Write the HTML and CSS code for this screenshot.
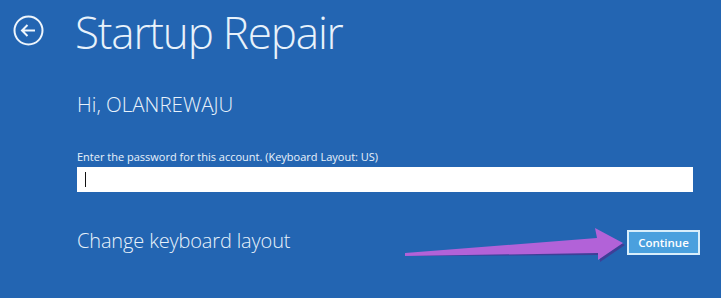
FILE: index.html
```html
<!DOCTYPE html>
<html>
<head>
  <meta charset="UTF-8">
  <title>Startup Repair</title>
  <link rel="stylesheet" href="styles.css">
</head>
<body>

<div id="screen">
  <div class="header">
    <button class="backBtn" aria-label="Back">
      <svg width="31" height="31" viewBox="0 0 31 31">
        <circle cx="15.5" cy="15.5" r="14" fill="none" stroke="#eef5fc" stroke-width="2"/>
        <path d="M9 15.5 H22 M14.5 10 L9 15.5 L14.5 21" fill="none" stroke="#eef5fc" stroke-width="2"/>
      </svg>
    </button>
    <h1>Startup Repair</h1>
  </div>

  <div class="content">
    <div class="greeting">Hi, OLANREWAJU</div>
    <label class="fieldLabel" for="password">Enter the password for this account. (Keyboard Layout: US)</label>
    <div class="passwordBox">
      <span class="caret"></span>
    </div>
    <div class="actions">
      <a class="changeLayout">Change keyboard layout</a>
      <button class="continueBtn">Continue</button>
    </div>
  </div>

  <svg class="pointer" width="230" height="40" viewBox="0 0 230 40">
    <polygon points="2,33 194,18 192,7 220,22 195,39 195,32" fill="#4a2f8c" opacity="0.7"/>
    <polygon points="0,30 192,15 190,5 218,20 193,37 193,30 0,33" fill="#b262d8"/>
  </svg>
</div>

</body>
</html>
```

FILE: styles.css
```css
body, html {
  margin: 0;
  padding: 0;
  background: #2365b2;
  font-family: "Open Sans", "Segoe UI", sans-serif;
  color: #e8f2fb;
  overflow: hidden;
}
#screen {
  position: relative;
  width: 721px;
  height: 298px;
}
.header {
  display: flex;
  align-items: center;
  height: 64px;
  padding-left: 13px;
}
.backBtn {
  background: none;
  border: none;
  padding: 0;
  width: 31px;
  height: 31px;
  margin-bottom: 4px;
}
.backBtn svg {
  display: block;
}
h1 {
  margin: 0 0 0 31px;
  font-size: 44px;
  font-weight: 300;
  line-height: 50px;
  letter-spacing: -1.2px;
}
.content {
  padding-left: 77px;
  width: 624px;
}
.greeting {
  margin-top: 28px;
  font-size: 20.5px;
  font-weight: 300;
  line-height: 24px;
}
.fieldLabel {
  display: block;
  margin-top: 34px;
  font-size: 11px;
  line-height: 14px;
}
.passwordBox {
  margin-top: 3px;
  width: 616px;
  height: 25px;
  background: #fff;
  display: flex;
  align-items: center;
}
.caret {
  width: 1px;
  height: 15px;
  background: #111;
  margin-left: 8px;
}
.actions {
  display: flex;
  justify-content: space-between;
  align-items: center;
  margin-top: 38px;
}
.changeLayout {
  font-size: 20px;
  font-weight: 300;
  line-height: 24px;
  letter-spacing: -0.15px;
  margin-top: -3px;
}
.continueBtn {
  width: 73px;
  height: 25px;
  margin-right: 1px;
  background: #4aa0de;
  border: 2px solid #d8eefb;
  color: #fff;
  font-family: "Open Sans", sans-serif;
  font-weight: 600;
  font-size: 11.5px;
  padding: 0;
}
.pointer {
  position: absolute;
  left: 405px;
  top: 223px;
}
```
